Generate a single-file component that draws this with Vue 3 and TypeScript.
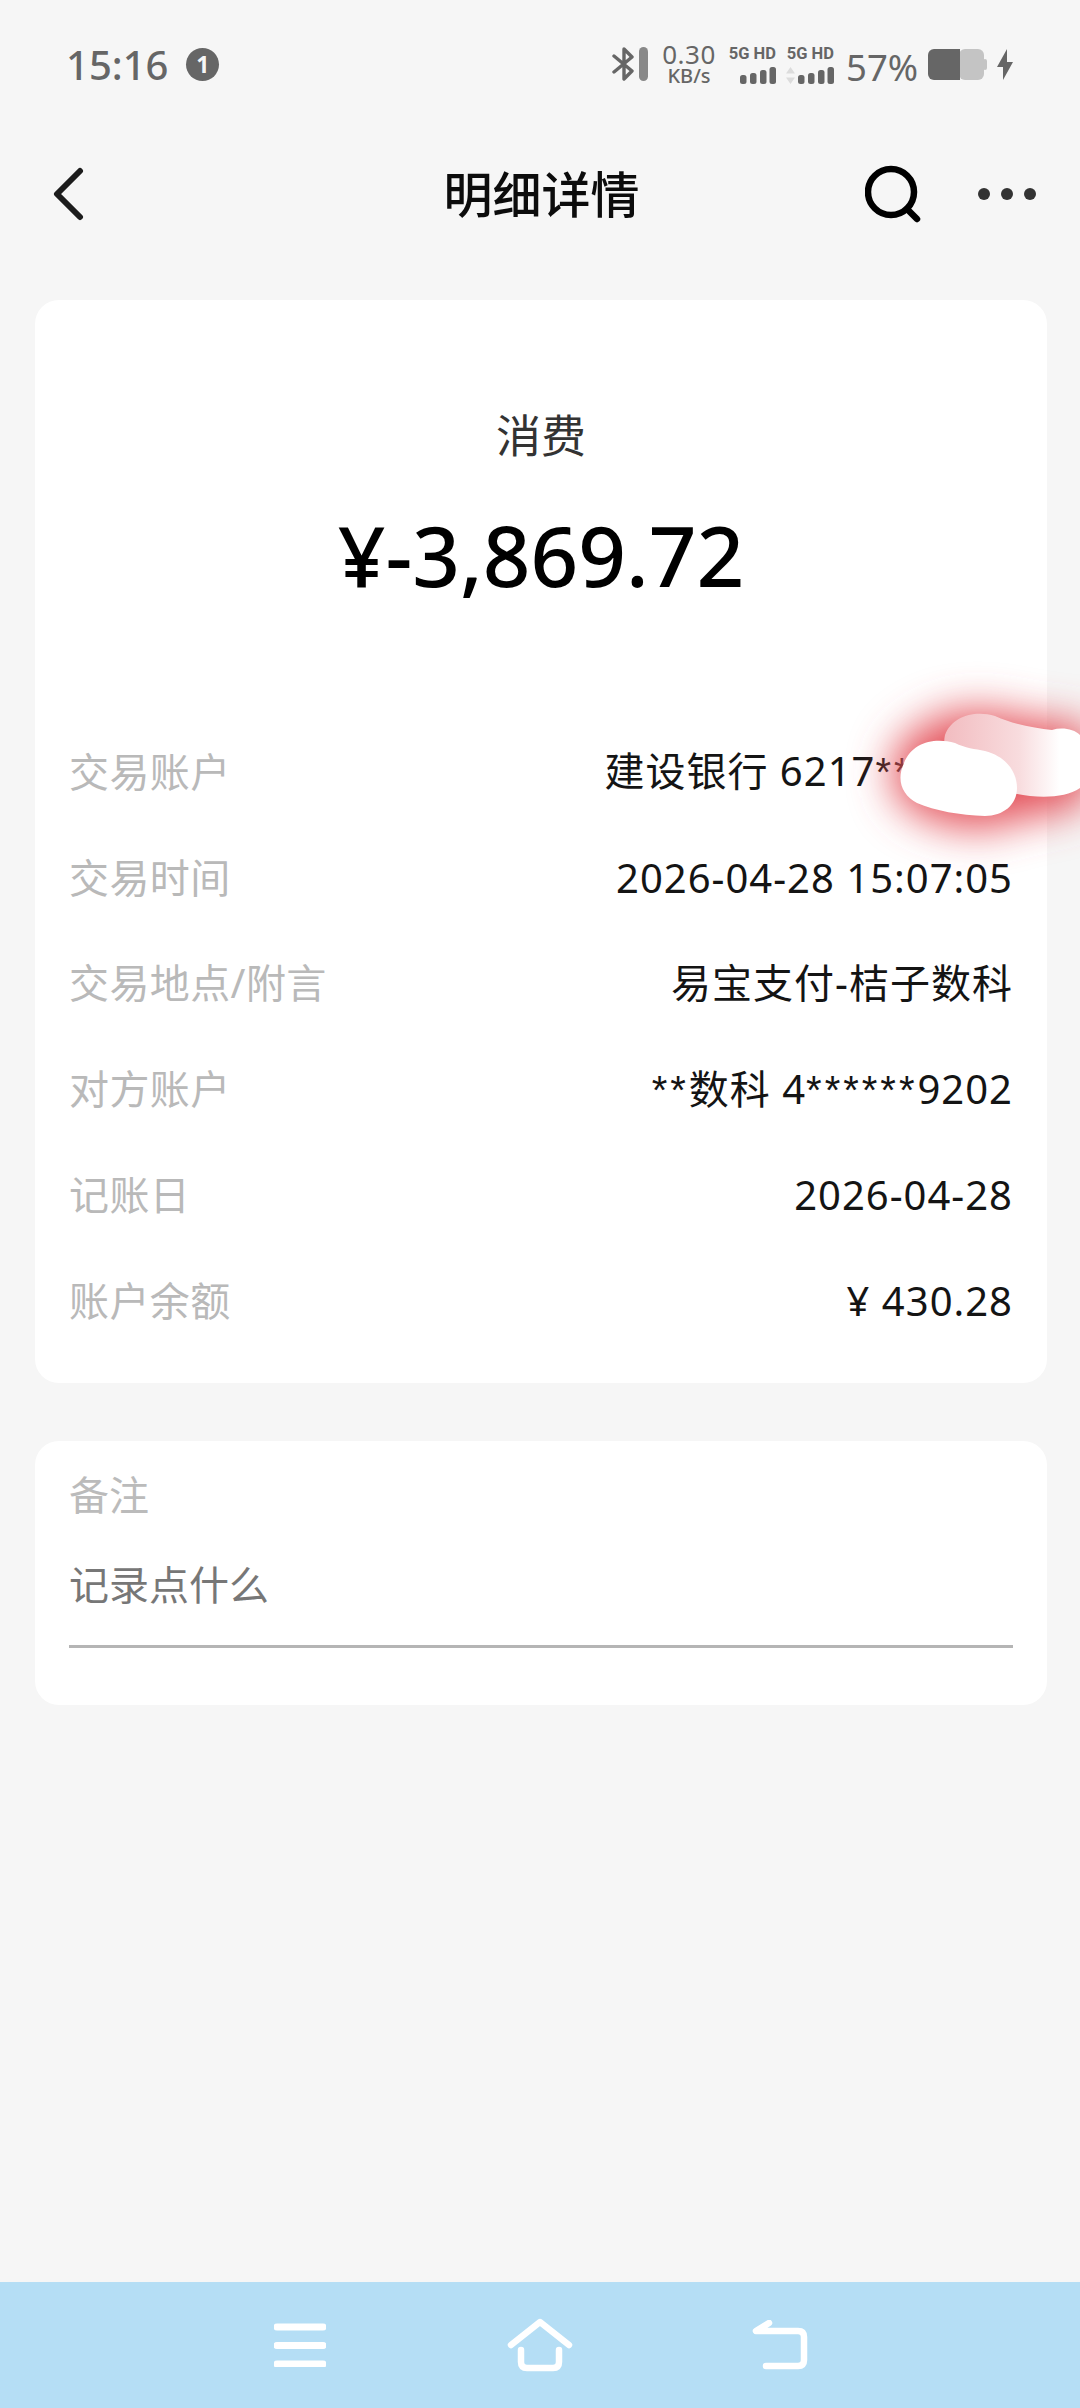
<template>
  <div class="page">
    <div class="status-bar">
      <div class="status-left">
        <span class="clock">15:16</span>
        <span class="notify">1</span>
      </div>
      <div class="status-right">
        <svg class="bt" width="37" height="36" viewBox="0 0 37 36">
          <path d="M2 10 L20 25 L12 33 V3 L20 11 L2 26" fill="none" stroke="#666" stroke-width="3.4" stroke-linejoin="round" stroke-linecap="round" />
          <rect x="27" y="1" width="9" height="34" rx="4.5" fill="#888" />
        </svg>
        <div class="speed">
          <span class="speed-num">0.30</span>
          <span class="speed-unit">KB/s</span>
        </div>
        <div class="sim">
          <span class="sim-label">5G HD</span>
          <div class="sim-row">
            <svg width="36" height="17" viewBox="0 0 36 17">
              <rect v-for="b in bars" :key="b.x" :x="b.x" :y="17 - b.h" width="6.5" :height="b.h" rx="2.5" fill="#666" />
            </svg>
          </div>
        </div>
        <div class="sim">
          <span class="sim-label">5G HD</span>
          <div class="sim-row">
            <svg width="9" height="17" viewBox="0 0 9 17">
              <path d="M4.5 0 L9 6.5 H0 Z M4.5 17 L0 10.5 H9 Z" fill="#dcdcdc" />
            </svg>
            <svg width="36" height="17" viewBox="0 0 36 17">
              <rect v-for="b in bars" :key="b.x" :x="b.x" :y="17 - b.h" width="6.5" :height="b.h" rx="2.5" fill="#666" />
            </svg>
          </div>
        </div>
        <span class="percent">57%</span>
        <svg class="battery" width="59" height="31" viewBox="0 0 59 31">
          <rect x="31" y="0" width="25" height="31" rx="6" fill="#c4c4c4" />
          <path d="M6 0 H32 V31 H6 A6 6 0 0 1 0 25 V6 A6 6 0 0 1 6 0 Z" fill="#666" />
          <rect x="55" y="10" width="4" height="11" rx="2" fill="#c4c4c4" />
        </svg>
        <svg class="bolt" width="16" height="31" viewBox="0 0 16 31">
          <path d="M10 0 L0 18 H6 L6 31 L16 13 H10 Z" fill="#666" />
        </svg>
      </div>
    </div>

    <header class="top-bar">
      <svg class="back" width="32" height="54" viewBox="0 0 32 54">
        <path d="M28 4 L5 27 L28 50" fill="none" stroke="#1c1c1c" stroke-width="6" stroke-linecap="round" stroke-linejoin="round" />
      </svg>
      <h1 class="title">明细详情</h1>
      <div class="top-actions">
        <svg width="56" height="60" viewBox="0 0 56 60">
          <circle cx="26" cy="28" r="23" fill="none" stroke="#000" stroke-width="6.5" />
          <path d="M42 45 L52 55" stroke="#000" stroke-width="6.5" stroke-linecap="round" />
        </svg>
        <svg width="58" height="14" viewBox="0 0 58 14">
          <circle cx="6" cy="7" r="6" fill="#333" />
          <circle cx="29" cy="7" r="6" fill="#333" />
          <circle cx="52" cy="7" r="6" fill="#333" />
        </svg>
      </div>
    </header>

    <main class="content">
      <section class="card detail">
        <div class="kind">消费</div>
        <div class="amount">¥-3,869.72</div>
        <div v-for="row in rows" :key="row.label" class="row">
          <span class="row-label">{{ row.label }}</span>
          <span class="row-value">
            <template v-for="(part, i) in splitStars(row.value)" :key="i">
              <span v-if="part.startsWith('*')" class="stars">{{ part }}</span>
              <template v-else>{{ part }}</template>
            </template>
          </span>
        </div>
      </section>

      <section class="card note">
        <div class="note-label">备注</div>
        <div class="note-input">记录点什么</div>
      </section>
    </main>

    <nav class="nav-bar">
      <svg width="52" height="44" viewBox="0 0 52 44">
        <path d="M3 4 H49 M3 22.500 H49 M3 41 H49" stroke="#fff" stroke-width="7" stroke-linecap="round" />
      </svg>
      <svg width="66" height="54" viewBox="0 0 66 54">
        <path d="M4 27 L33 4 L62 27" fill="none" stroke="#fff" stroke-width="6.500" stroke-linecap="round" stroke-linejoin="round" />
        <path d="M14 32 V44 Q14 50 20 50 H46 Q52 50 52 44 V32" fill="none" stroke="#fff" stroke-width="6.500" stroke-linecap="round" />
      </svg>
      <svg width="56" height="50" viewBox="0 0 56 50">
        <path d="M17 3 L4 11 H46 Q52 11 52 17 V40 Q52 46 46 46 H14" fill="none" stroke="#fff" stroke-width="6.500" stroke-linecap="round" stroke-linejoin="round" />
      </svg>
    </nav>

    <!-- 打码涂抹层，盖在账号上 -->
    <svg class="smudge" width="280" height="240" viewBox="800 650 280 240">
      <defs>
        <filter id="glow" x="-40%" y="-60%" width="180%" height="220%">
          <feGaussianBlur stdDeviation="21" />
        </filter>
        <linearGradient id="backFill" x1="0" y1="0" x2="1" y2="0">
          <stop offset="0" stop-color="#f2bcc0" />
          <stop offset="0.55" stop-color="#f8dcde" />
          <stop offset="0.85" stop-color="#ffffff" />
        </linearGradient>
      </defs>
      <path d="M900 745 C930 715 960 705 1000 712 C1040 722 1060 722 1090 725 L1090 800 C1060 815 1040 815 1015 820 C990 835 950 830 920 815 C890 800 885 770 900 745 Z" fill="#e4525c" filter="url(#glow)" />
      <path d="M945 735 C952 716 975 710 995 716 C1015 725 1035 728 1052 730 C1062 727 1074 729 1080 735 L1080 788 C1068 796 1050 798 1030 796 C1010 794 990 788 960 770 C948 760 942 748 945 735 Z" fill="url(#backFill)" />
      <path d="M904 763 C912 742 935 737 955 743 C965 748 975 749 985 751 C1005 756 1017 771 1017 788 C1017 805 1003 816 985 816 C960 815 935 811 917 803 C902 795 896 780 904 763 Z" fill="#fff" />
    </svg>
  </div>
</template>

<script setup lang="ts">
interface DetailRow {
  label: string
  value: string
}

const rows: DetailRow[] = [
  { label: '交易账户', value: '建设银行 6217*******\u2009' },
  { label: '交易时间', value: '2026-04-28 15:07:05' },
  { label: '交易地点/附言', value: '易宝支付-桔子数科' },
  { label: '对方账户', value: '**数科 4******9202' },
  { label: '记账日', value: '2026-04-28' },
  { label: '账户余额', value: '¥ 430.28' },
]

const bars = [
  { x: 0, h: 9 },
  { x: 10, h: 11 },
  { x: 20, h: 14 },
  { x: 29.5, h: 17 },
]

// 星号单独包一层，字形比正文窄
const splitStars = (value: string) => value.split(/(\*+)/).filter(Boolean)
</script>

<style>
html,
body {
  margin: 0;
  background: #f6f6f6;
}
</style>

<style scoped>
.page {
  position: relative;
  width: 1080px;
  height: 2408px;
  overflow: hidden;
  display: flex;
  flex-direction: column;
  background: #f6f6f6;
  font-family: "Noto Sans", "Noto Sans CJK SC", sans-serif;
}

.status-bar {
  height: 128px;
  flex: none;
  display: flex;
  align-items: center;
  justify-content: space-between;
  padding: 0 67px 0 66px;
  color: #666;
}

.status-left {
  display: flex;
  align-items: center;
  gap: 18px;
}

.clock {
  font-size: 40px;
  font-weight: 500;
}

.notify {
  width: 33px;
  height: 33px;
  border-radius: 50%;
  background: #666;
  color: #f6f6f6;
  font-size: 23px;
  font-weight: 700;
  display: flex;
  align-items: center;
  justify-content: center;
}

.status-right {
  display: flex;
  align-items: center;
}

.speed {
  display: flex;
  flex-direction: column;
  align-items: center;
  margin-left: 13px;
  width: 54px;
  line-height: 1;
}

.speed-num {
  font-size: 26px;
  height: 24px;
  line-height: 24px;
  letter-spacing: 0.5px;
}

.speed-unit {
  font-size: 20px;
  font-weight: 500;
  height: 20px;
  line-height: 20px;
}

.sim {
  display: flex;
  flex-direction: column;
  align-items: flex-end;
  width: 48px;
  margin-left: 12px;
}

.sim + .sim {
  margin-left: 10px;
}

.sim-label {
  font-family: "Roboto", sans-serif;
  font-size: 16.5px;
  font-weight: 700;
  line-height: 17px;
  white-space: nowrap;
}

.sim-row {
  display: flex;
  align-items: center;
  gap: 3px;
  margin-top: 5px;
  height: 17px;
}

.percent {
  font-size: 36.5px;
  line-height: 40px;
  margin-left: 12px;
  margin-top: 6px;
  width: 70px;
}

.battery {
  margin-left: 12px;
}

.bolt {
  margin-left: 10px;
}

.top-bar {
  height: 132px;
  flex: none;
  display: grid;
  grid-template-columns: 1fr auto 1fr;
  align-items: center;
  padding: 0 44px 0 52px;
}

.title {
  margin: 0 5px 0 0;
  font-size: 49px;
  font-weight: 500;
  color: #0c0c0c;
  line-height: 60px;
}

.top-actions {
  display: flex;
  align-items: center;
  justify-content: flex-end;
  gap: 57px;
}

.content {
  flex: 1;
  padding: 40px 33px 0 35px;
  display: flex;
  flex-direction: column;
  gap: 58px;
}

.card {
  background: #fff;
  border-radius: 24px;
}

.detail {
  padding: 106px 34px 28px;
}

.kind {
  text-align: center;
  font-size: 45px;
  line-height: 60px;
  color: #333;
}

.amount {
  margin-top: 39px;
  margin-bottom: 115px;
  text-align: center;
  font-size: 83.5px;
  line-height: 100px;
  font-weight: 500;
  color: #000;
}

.row {
  height: 105.8px;
  display: flex;
  align-items: center;
  justify-content: space-between;
  font-size: 40px;
  line-height: 52px;
}

.row-label {
  color: #b9b9b9;
  white-space: nowrap;
  letter-spacing: 0.4px;
  margin-top: -2px;
}

.row-value {
  color: #141414;
  white-space: pre;
  letter-spacing: 1px;
  margin-top: -2px;
}

.stars {
  font-family: "Liberation Sans", sans-serif;
  letter-spacing: 3px;
}

.note {
  height: 264px;
  box-sizing: border-box;
  padding: 26px 34px 0;
}

.note-label {
  font-size: 40px;
  line-height: 56px;
  color: #bbb;
}

.note-input {
  margin-top: 34px;
  height: 91px;
  box-sizing: border-box;
  border-bottom: 3px solid #b5b5b5;
  font-size: 40px;
  line-height: 56px;
  color: #777;
}

.nav-bar {
  height: 126px;
  flex: none;
  background: #b5def5;
  display: grid;
  grid-template-columns: 240px 240px 240px;
  justify-content: center;
  justify-items: center;
  align-items: center;
}

.smudge {
  position: absolute;
  left: 800px;
  top: 650px;
}
</style>
